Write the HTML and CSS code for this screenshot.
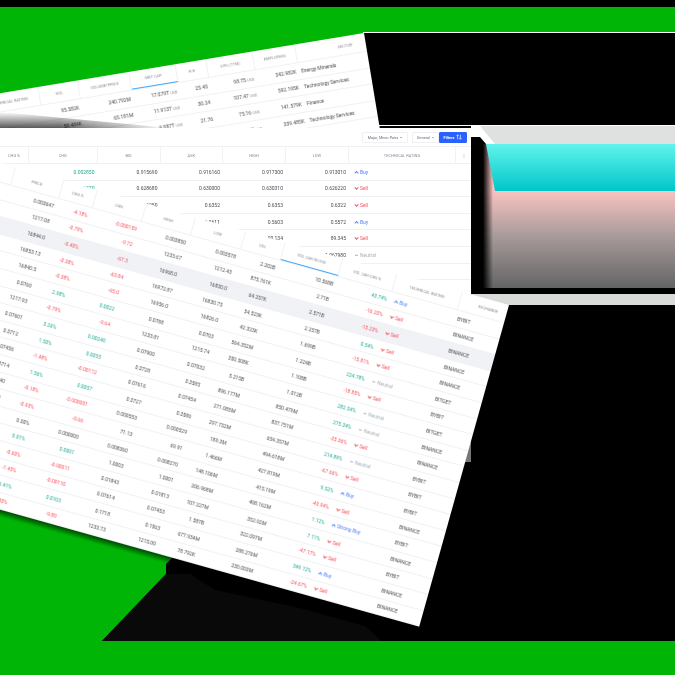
FILE: index.html
```html
<!DOCTYPE html>
<html lang="en">
<head>
<meta charset="utf-8">
<title>Screener</title>
<link rel="stylesheet" href="styles.css">
</head>
<body>
<main class="stage">
  <svg class="scene" viewBox="0 0 675 675" width="675" height="675" aria-hidden="true">
    <defs>
      <linearGradient id="cyan" x1="0" y1="0" x2="0" y2="1"><stop offset="0" stop-color="#62f3ec"/><stop offset="1" stop-color="#00c6c9"/></linearGradient>
      <linearGradient id="rose" x1="0" y1="0" x2="0" y2="1"><stop offset="0" stop-color="#f8c3c1"/><stop offset=".5" stop-color="#a39797"/><stop offset="1" stop-color="#646464"/></linearGradient>
      <linearGradient id="fade" x1="0" y1="0" x2="1" y2="0"><stop offset=".5" stop-color="#000"/><stop offset=".92" stop-color="#000" stop-opacity="0"/></linearGradient>
    </defs>
    <rect width="675" height="675" fill="#000"/>
    <rect y="7" width="675" height="668" fill="#00b505"/>
    <polygon points="363,33 675,33 675,641 102,641 166,574 166,564 175,555" fill="#000"/>
    <polygon points="166,574 190,574 215,590 300,608 365,626 382,641 102,641" fill="#090909"/>
    <rect x="363" y="32" width="312" height="1" fill="#fff"/>
    <rect x="378" y="125" width="297" height="1" fill="#fff"/>
    <rect x="471" y="126" width="204" height="18" fill="#dfe0e0"/>
    <polygon points="471,126 480,126 495,144 471,144" fill="#fff"/>
    <rect x="471" y="144" width="30" height="47" fill="#f8c3c1"/>
    <rect x="471" y="191" width="204" height="97" fill="url(#rose)"/>
    <polygon points="471,137 480,137 486,144 471,144" fill="#000"/>
    <rect x="471" y="144" width="24" height="144" fill="url(#fade)"/>
    <polygon points="486,144 675,144 675,191 495,191" fill="url(#cyan)"/>
    <rect x="471" y="294" width="204" height="11" fill="#d9dbd9"/>
    <rect x="460" y="440" width="11" height="22" fill="#777"/>
  </svg>

  <section class="win back">
    <div class="row head">
      <span>TECHNICAL RATING</span><span>VOL</span><span>VOLUME*PRICE</span><span class="active">MKT CAP</span><span>P/E</span><span>EPS (TTM)</span><span>EMPLOYEES</span><span>SECTOR</span>
    </div>
    <div class="row"><span></span><span>95.382K</span><span>240.792M</span><span>17.079T <small>USD</small></span><span>25.45</span><span>98.75 <small>USD</small></span><span>342.982K</span><span class="left">Energy Minerals</span></div>
    <div class="row"><span></span><span>58.484K</span><span>65.181M</span><span>11.913T <small>USD</small></span><span>30.24</span><span>107.47 <small>USD</small></span><span>592.195K</span><span class="left">Technology Services</span></div>
    <div class="row"><span></span><span>91.220K</span><span>48.306M</span><span>9.087T <small>USD</small></span><span>21.76</span><span>75.16 <small>USD</small></span><span>141.579K</span><span class="left">Finance</span></div>
    <div class="row"><span></span><span>70.115K</span><span>41.702M</span><span>8.431T <small>USD</small></span><span>18.32</span><span>64.08 <small>USD</small></span><span>339.485K</span><span class="left">Technology Services</span></div>
  </section>
  <div class="back-shade"></div>

  <section class="win front">
    <div class="toolbar">
      <span class="tool">Major, Minor Pairs <i class="caret"></i></span>
      <span class="tool general">General <i class="caret"></i></span>
      <span class="tool filters">Filters
        <svg class="filter-icon" viewBox="0 0 8 8" width="6" height="6"><path d="M2.2 7V1M.8 2.4 2.2 1l1.4 1.4M5.8 1v6M4.4 5.6 5.8 7l1.4-1.4" fill="none" stroke="#fff" stroke-width=".9"/></svg>
      </span>
    </div>
    <div class="row head">
      <span>CHG %</span><span>CHG</span><span>BID</span><span>ASK</span><span>HIGH</span><span>LOW</span><span>TECHNICAL RATING</span><span class="dots">⋮</span>
    </div>
    <div class="row"><span class="g">0.31%</span><span class="g">0.002850</span><span>0.915690</span><span>0.916160</span><span>0.917300</span><span>0.913010</span><span class="tech up">Buy</span><span></span></div>
    <div class="row"><span class="g">0.22%</span><span class="g">0.001370</span><span>0.628680</span><span>0.630000</span><span>0.630310</span><span>0.626220</span><span class="tech dn">Sell</span><span></span></div>
    <div class="row"><span class="r">-0.14%</span><span class="r">-0.0009</span><span>0.6250</span><span>0.6352</span><span>0.6353</span><span>0.6322</span><span class="tech dn">Sell</span><span></span></div>
    <div class="row"><span class="g">0.10%</span><span class="g">0.0006</span><span>0.5598</span><span>0.5611</span><span>0.5603</span><span>0.5572</span><span class="tech up">Buy</span><span></span></div>
    <div class="row"><span class="r">-0.27%</span><span class="r">-0.242</span><span>89.412</span><span>89.450</span><span>90.134</span><span>89.345</span><span class="tech dn">Sell</span><span></span></div>
    <div class="row"><span class="g">0.01%</span><span class="g">0.0001</span><span>1.069110</span><span>1.069140</span><span>1.072040</span><span>1.067980</span><span class="tech nt">Neutral</span><span></span></div>
    <div class="row blank"></div><div class="row blank"></div>
  </section>

  <section class="win third">
    <div class="row head">
      <span></span><span>PRICE</span><span>CHG %</span><span>CHG</span><span>HIGH</span><span>LOW</span><span>VOL</span><span class="active">VOL 24H IN USD</span><span>VOL 24H CHG %</span><span>TECHNICAL RATING</span><span>EXCHANGE</span>
    </div>
    <div class="row"><span></span><span>0.003647</span><span class="r">-4.18%</span><span class="r">-0.000159</span><span>0.003850</span><span>0.003578</span><span>2.202B</span><span>10.568B</span><span class="g">43.74%</span><span class="tech up">Buy</span><span class="left">BYBIT</span></div>
    <div class="row"><span></span><span>1217.08</span><span class="r">-0.79%</span><span class="r">-9.72</span><span>1233.67</span><span>1212.43</span><span>875.761K</span><span>2.71B</span><span class="r">-16.20%</span><span class="tech dn">Sell</span><span class="left">BINANCE</span></div>
    <div class="row hi"><span></span><span>16844.0</span><span class="r">-0.40%</span><span class="r">-67.3</span><span>16968.0</span><span>16830.0</span><span>64.257K</span><span>2.571B</span><span class="r">-15.23%</span><span class="tech dn">Sell</span><span class="left">BINANCE</span></div>
    <div class="row"><span></span><span>16853.13</span><span class="r">-0.38%</span><span class="r">-63.84</span><span>16972.87</span><span>16830.75</span><span>54.523K</span><span>2.257B</span><span class="g">0.54%</span><span class="tech dn">Sell</span><span class="left">BINANCE</span></div>
    <div class="row"><span></span><span>16840.5</span><span class="r">-0.38%</span><span class="r">-65.0</span><span>16956.0</span><span>16826.0</span><span>42.323K</span><span>1.699B</span><span class="r">-15.81%</span><span class="tech dn">Sell</span><span class="left">BINANCE</span></div>
    <div class="row"><span></span><span>0.0760</span><span class="g">2.98%</span><span class="g">0.0022</span><span>0.0788</span><span>0.0703</span><span>564.352M</span><span>1.224B</span><span class="g">224.78%</span><span class="tech nt">Neutral</span><span class="left">BITGET</span></div>
    <div class="row"><span></span><span>1217.93</span><span class="r">-0.79%</span><span class="r">-9.64</span><span>1233.81</span><span>1215.74</span><span>350.508K</span><span>1.108B</span><span class="r">-18.85%</span><span class="tech dn">Sell</span><span class="left">BYBIT</span></div>
    <div class="row"><span></span><span>0.07601</span><span class="g">3.26%</span><span class="g">0.00240</span><span>0.07900</span><span>0.07032</span><span>5.215B</span><span>1.012B</span><span class="g">282.54%</span><span class="tech nt">Neutral</span><span class="left">BITGET</span></div>
    <div class="row"><span></span><span>0.3712</span><span class="g">1.50%</span><span class="g">0.0055</span><span>0.3728</span><span>0.3585</span><span>896.177M</span><span>850.479M</span><span class="g">275.34%</span><span class="tech nt">Neutral</span><span class="left">BINANCE</span></div>
    <div class="row"><span></span><span>0.07456</span><span class="r">-1.48%</span><span class="r">-0.00112</span><span>0.07616</span><span>0.07454</span><span>271.085M</span><span>837.751M</span><span class="r">-35.06%</span><span class="tech dn">Sell</span><span class="left">BINANCE</span></div>
    <div class="row"><span></span><span>0.3714</span><span class="g">1.56%</span><span class="g">0.0057</span><span>0.3727</span><span>0.3586</span><span>297.732M</span><span>654.357M</span><span class="g">214.89%</span><span class="tech nt">Neutral</span><span class="left">BYBIT</span></div>
    <div class="row"><span></span><span>0.000540</span><span class="r">-0.18%</span><span class="r">-0.000001</span><span>0.000553</span><span>0.000529</span><span>189.3M</span><span>494.618M</span><span class="r">-67.66%</span><span class="tech dn">Sell</span><span class="left">BYBIT</span></div>
    <div class="row"><span></span><span>70.50</span><span class="r">-0.93%</span><span class="r">-0.66</span><span>71.13</span><span>69.91</span><span>1.466M</span><span>427.819M</span><span class="g">9.52%</span><span class="tech up">Buy</span><span class="left">BYBIT</span></div>
    <div class="row"><span></span><span>0.008300</span><span>0.00%</span><span>0.000000</span><span>0.008360</span><span>0.008270</span><span>148.106M</span><span>415.19M</span><span class="r">-43.94%</span><span class="tech dn">Sell</span><span class="left">BINANCE</span></div>
    <div class="row"><span></span><span>1.0002</span><span class="g">0.01%</span><span class="g">0.0001</span><span>1.0003</span><span>1.0001</span><span>206.968M</span><span>408.162M</span><span class="g">1.12%</span><span class="tech up">Strong Buy</span><span class="left">BYBIT</span></div>
    <div class="row"><span></span><span>0.01826</span><span class="r">-0.60%</span><span class="r">-0.00011</span><span>0.01843</span><span>0.01813</span><span>107.227M</span><span>352.92M</span><span class="g">7.11%</span><span class="tech dn">Sell</span><span class="left">BINANCE</span></div>
    <div class="row"><span></span><span>0.07480</span><span class="r">-1.45%</span><span class="r">-0.00110</span><span>0.07614</span><span>0.07453</span><span>1.587B</span><span>322.097M</span><span class="r">-47.17%</span><span class="tech dn">Sell</span><span class="left">BYBIT</span></div>
    <div class="row"><span></span><span>0.1710</span><span class="g">6.41%</span><span class="g">0.0103</span><span>0.1718</span><span>0.1563</span><span>677.934M</span><span>288.276M</span><span class="g">349.12%</span><span class="tech up">Buy</span><span class="left">BINANCE</span></div>
    <div class="row"><span></span><span>1218.10</span><span class="r">-1.80%</span><span class="r">-9.80</span><span>1233.73</span><span>1215.00</span><span>78.792K</span><span>230.003M</span><span class="r">-24.67%</span><span class="tech dn">Sell</span><span class="left">BINANCE</span></div>
  </section>
</main>
</body>
</html>
```
FILE: styles.css
```css
* { box-sizing: border-box; }
html, body { margin: 0; background: #000; }
.stage {
  position: relative;
  width: 675px;
  height: 675px;
  overflow: hidden;
  font-family: Roboto, "Liberation Sans", sans-serif;
  font-size: 5px;
  color: #4b4c52;
}
.scene { position: absolute; inset: 0; display: block; }

.win { position: absolute; background: #fff; filter: blur(.42px); }
.row { display: grid; align-items: center; height: 16.6px; border-bottom: 1px solid #f0f1f4; white-space: nowrap; }
.row > span { text-align: right; padding-right: 3px; min-width: 0; }
.row small { font-size: 3.6px; color: #888; }
.row > .left { text-align: left; padding: 0 0 0 2px; }
.head { align-items: stretch; }
.head > span {
  display: flex; align-items: center; justify-content: center;
  padding: 0; color: #8d8e95; font-size: 4px;
  border-right: 1px solid #f0f1f4;
}
.head > span:last-child { border-right: 0; padding-left: 10px; }
.head > .active { border-bottom: 1px solid #42a5f5; }

.g { color: #22ab94; }
.r { color: #f7525f; }
.row > .tech { text-align: left; padding: 0 0 0 5px; }
.tech::before {
  content: ""; display: inline-block; width: 2px; height: 2px; margin-right: 2px;
  border-top: .4px solid currentColor; border-left: .4px solid currentColor;
}
.up { color: #4f80ff; }
.up::before { transform: translateY(.5px) rotate(45deg); }
.dn { color: #f7525f; }
.dn::before { transform: translateY(-.8px) rotate(225deg); }
.nt { color: #a9b4bc; }
.nt::before { width: 3px; height: 0; border-left: 0; transform: translateY(-1.2px); }

/* rear window */
.back {
  left: -26px; top: 33px; width: 390px; height: 200px;
  transform-origin: 100% 0; transform: rotate(-9.4deg);
}
.back .row { grid-template-columns: 60px 40px 52px 47px 31px 47px 43px 70px; }
.back .head { height: 19px; }
.back .head > span:last-child { padding-left: 28px; }
.back-shade {
  position: absolute; left: 0; top: 112px; width: 170px; height: 16px;
  background: linear-gradient(to top, rgba(0,0,0,.65), rgba(0,0,0,0));
  -webkit-mask-image: linear-gradient(to right, #000 35%, transparent);
  mask-image: linear-gradient(to right, #000 35%, transparent);
  clip-path: polygon(0 0, 100% 100%, 0 100%);
}

/* middle window */
.front { left: 0; top: 128px; width: 471px; height: 167px; }
.front .row { grid-template-columns: 29px 68.5px 63px 62.5px 63px 63px 107px 15px; }
.front .head { height: 18px; border-top: 1px solid #f0f1f4; }
.front .head > span:last-child { padding-left: 0; }
.front .tech { padding-left: 6px; }
.dots { color: #666; font-size: 6px; }
.toolbar { display: flex; justify-content: flex-end; align-items: center; height: 18px; padding-right: 4px; font-size: 3.8px; color: #6d6e74; }
.tool { display: flex; align-items: center; justify-content: center; height: 11px; padding: 0 3px; gap: 2px; border: 1px solid #eef0f3; border-radius: 1px; width: 46px; margin-right: 4px; }
.tool.general { width: 27px; margin-right: 0; }
.tool.filters { width: 28px; margin-right: 0; background: #2962ff; border-color: #2962ff; color: #fff; font-weight: 700; }
.caret { width: 0; height: 0; border: 1.2px solid transparent; border-top: 1.6px solid #666; border-bottom: 0; }
.filter-icon { display: block; }

/* near window */
.third {
  left: -91px; top: 305px; width: 600px; height: 334.4px;
  transform-origin: 100% 0; transform: rotate(15.6deg);
}
.third::after {
  content: ""; position: absolute; left: 0; right: 0; top: 100%; height: 7px;
  background: linear-gradient(to bottom, rgba(0,0,0,.6), rgba(0,0,0,0));
}
.third .row { grid-template-columns: 88px 50px 35px 51px 51px 52px 41px 60px 56px 68px 48px; }
.third .head { height: 19px; }
.third .hi { background: #f1f2f6; }
```
